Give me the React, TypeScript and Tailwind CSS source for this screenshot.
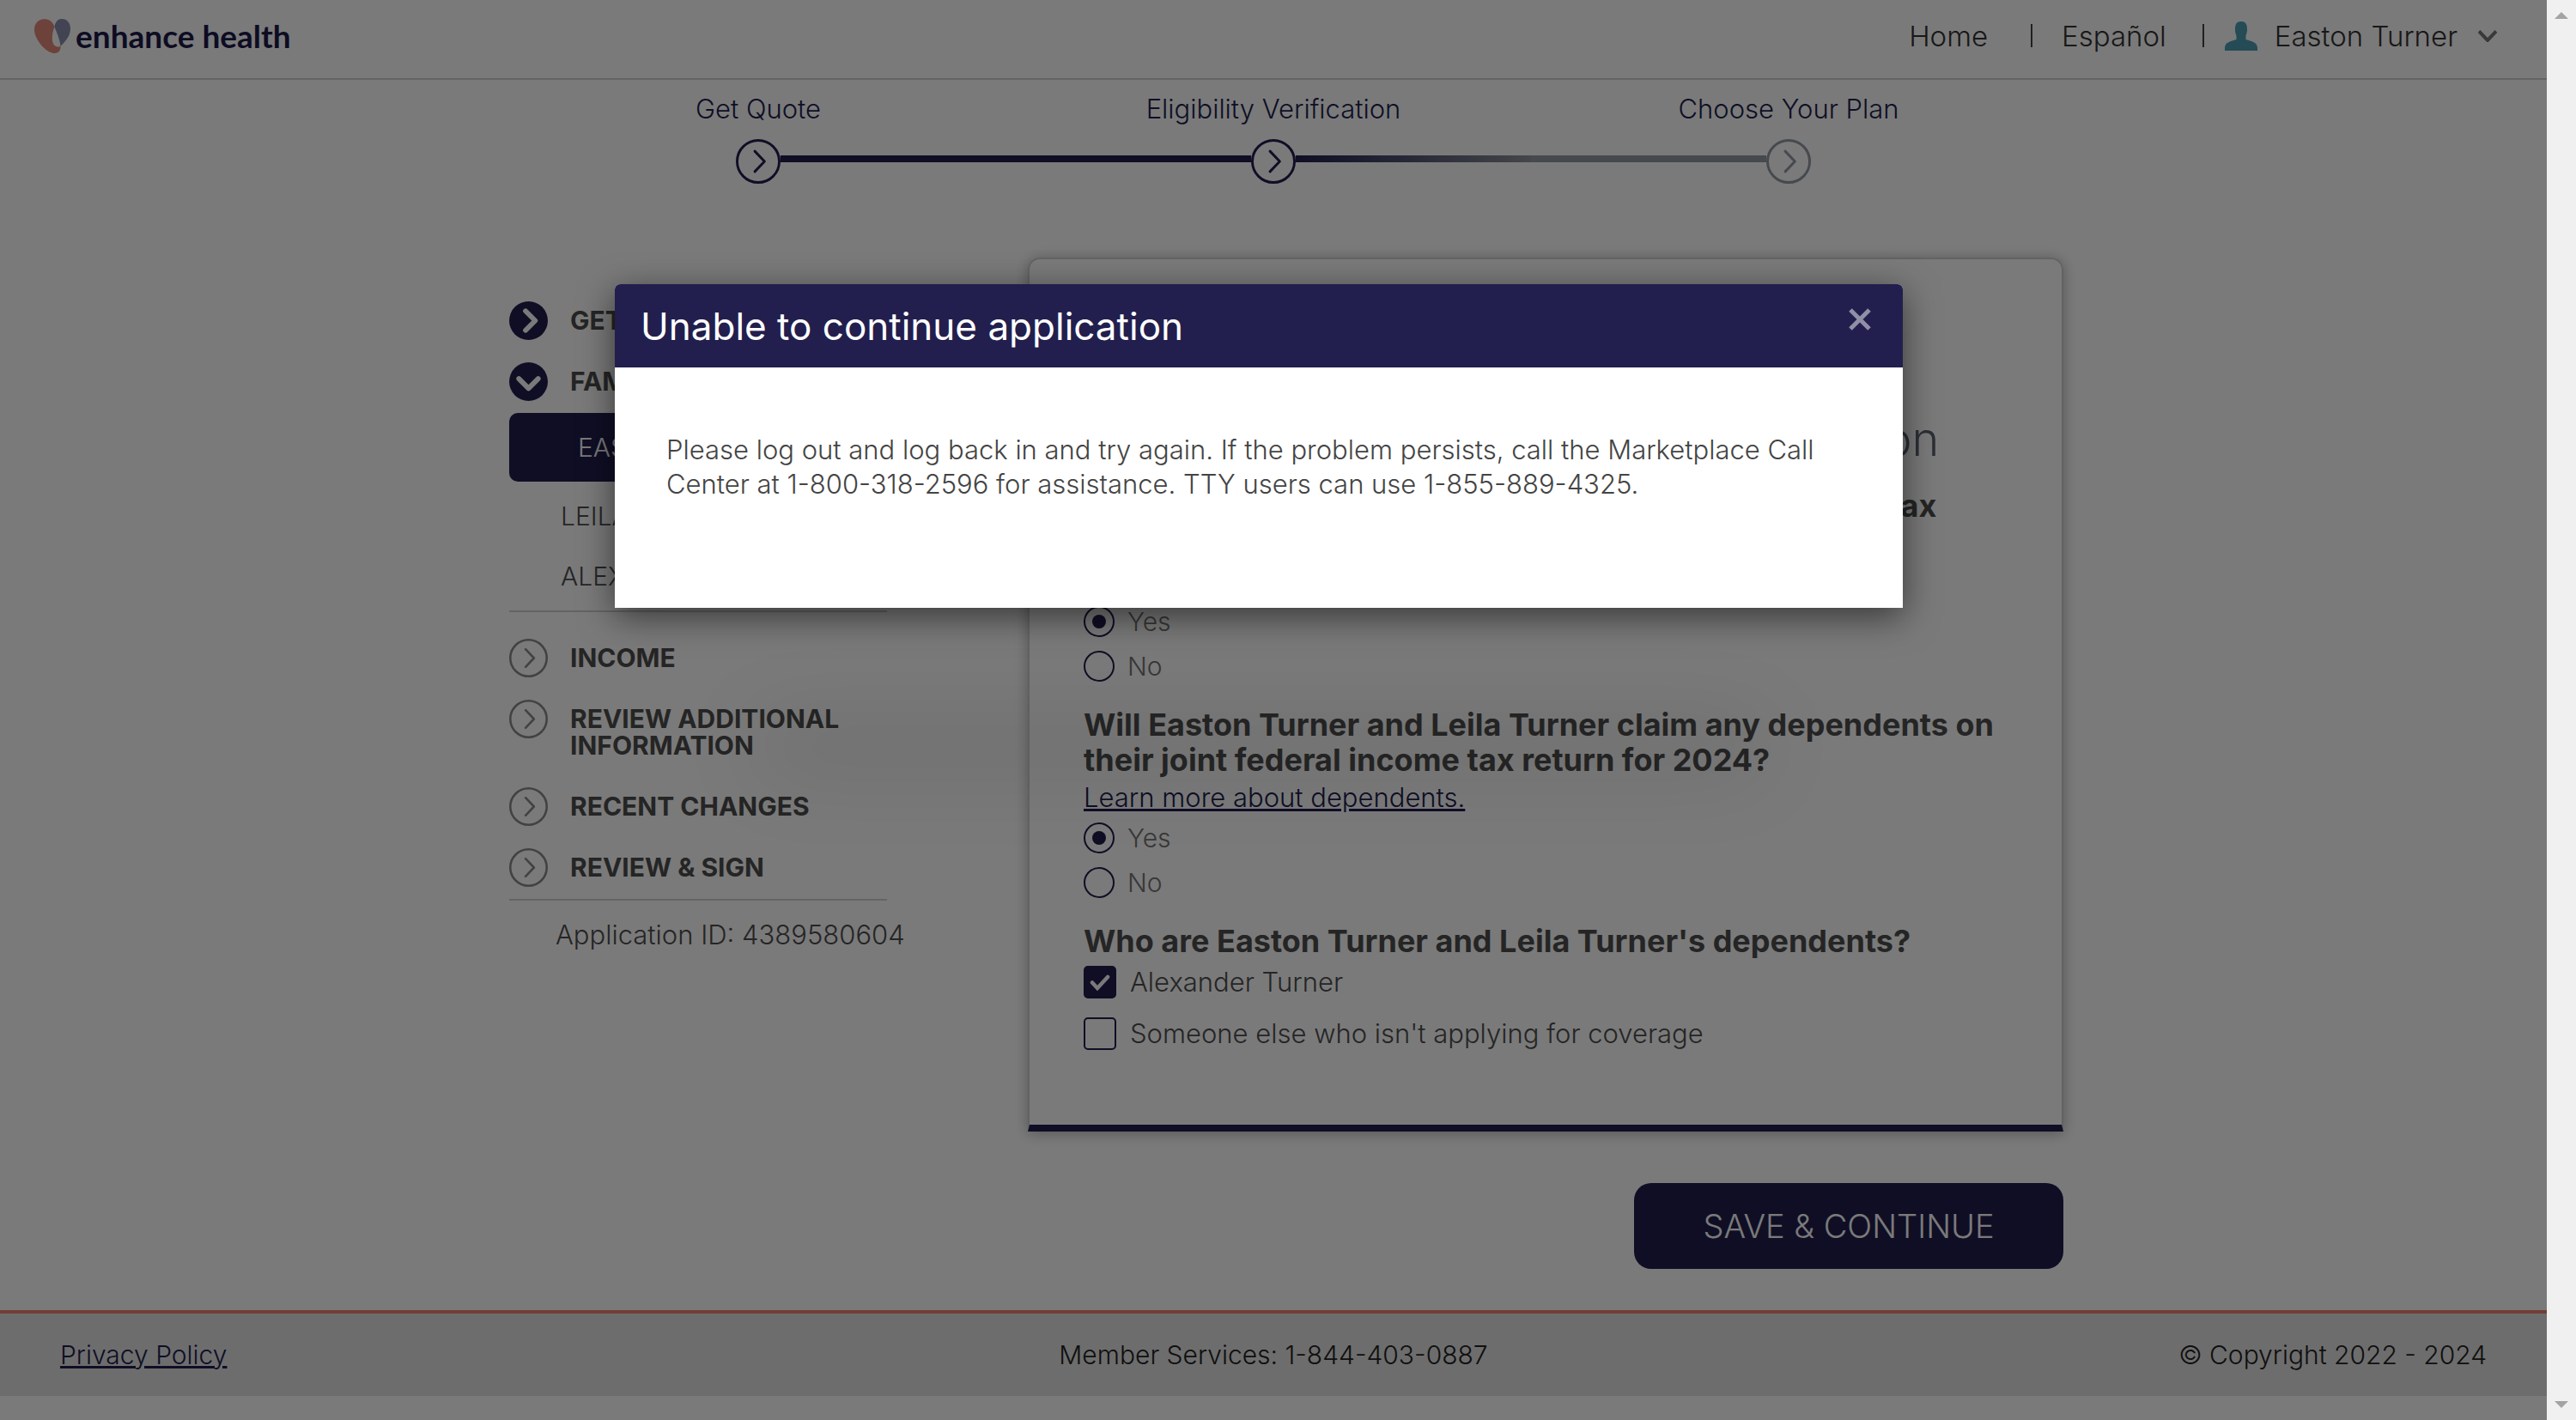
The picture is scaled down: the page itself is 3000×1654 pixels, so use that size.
import React from "react";

function ChevronCircle({ className = "", direction = "right", filled = false }: { className?: string; direction?: "right" | "down"; filled?: boolean }) {
  return (
    <svg viewBox="0 0 46 46" fill="none" aria-hidden="true" className={className}>
      <circle cx="23" cy="23" r={filled ? 23 : 21.7} fill={filled ? "#221f4e" : "none"} stroke={filled ? "none" : "currentColor"} strokeWidth="2.6" />
      <path
        d={filled ? "M19.5 11.5 31 23 19.5 34.5" : "M19.5 12.5 29.5 23 19.5 33.5"}
        transform={direction === "down" ? "rotate(90 23 23)" : undefined}
        stroke={filled ? "#fff" : "currentColor"}
        strokeWidth={filled ? 6 : 2.6}
        strokeLinecap="round"
        strokeLinejoin="round"
      />
    </svg>
  );
}

function Logo() {
  return (
    <a href="#home" className="flex items-center gap-1.5 text-[#1d1b4a]">
      <svg viewBox="0 0 126 120" className="h-10 w-[42px]" aria-hidden="true">
        <path fill="#e48a79" d="M70 28C64 8 50 1 34 1C14 1 0 16 0 38C0 70 40 120 72 120C86 120 92 110 92 94C86 101 66 100 63 76C61 55 66 40 70 28Z" />
        <path fill="#8b8fb0" d="M70 28C74 10 82 0 96 0C114 0 126 14 126 34C126 60 108 80 92 95C88 70 78 46 70 28Z" />
      </svg>
      <span className="font-['Lato'] text-[37px] leading-10 font-bold">enhance health</span>
    </a>
  );
}

function Header() {
  return (
    <header className="flex h-[93px] items-center justify-between border-b-2 border-[#d1d1d1] pr-[58px] pb-2 pl-10">
      <Logo />
      <nav className="flex items-center text-[33px] leading-10 font-light text-[#333]">
        <a href="#home">Home</a>
        <span className="mr-[34px] ml-[50px] h-[27px] w-0.5 bg-[#444]" />
        <a href="#es">Español</a>
        <span className="mr-6 ml-[42px] h-[27px] w-0.5 bg-[#444]" />
        <button type="button" className="flex items-center">
          <svg viewBox="0 0 38 34" className="mr-5 h-[34px] w-[38px]" aria-hidden="true">
            <path fill="#4b9db5" d="M12 9C12 3 14 0 19 0S26 3 26 9C26 14 25 14 24.500 17V21C31 23 38 24 38 31V34H0V31C0 24 7 23 13.500 21V17C13 14 12 14 12 9Z" />
          </svg>
          Easton Turner
          <svg viewBox="0 0 22 14" className="ml-6 h-3.5 w-[22px]" fill="none" aria-hidden="true">
            <path d="M1 1.500 11 12 21 1.500" stroke="#777" strokeWidth="4" />
          </svg>
        </button>
      </nav>
    </header>
  );
}

const steps = ["Get Quote", "Eligibility Verification", "Choose Your Plan"];

function Stepper() {
  return (
    <ol className="mx-auto grid w-[1800px] grid-cols-3 pt-[14px]">
      {steps.map((step, i) => (
        <li key={step} className="flex flex-col items-center gap-[15px]">
          <span className="text-[31px] leading-10 font-light text-[#221f4e]">{step}</span>
          <div className="flex w-full items-center">
            <span className={["h-2 flex-1 mb-1.5", "h-2 flex-1 mb-1.5 bg-[#221f4e]", "h-2 flex-1 mb-1.5 bg-[#929aa3]"][i]} />
            <ChevronCircle className={i === 2 ? "size-[52px] text-[#929aa3]" : "size-[52px] text-[#221f4e]"} />
            <span className={["h-2 flex-1 mb-1.5 bg-[#221f4e]", "h-2 flex-1 mb-1.5 bg-linear-to-r from-[#221f4e] to-[#90939a]", "h-2 flex-1 mb-1.5"][i]} />
          </div>
        </li>
      ))}
    </ol>
  );
}

function Section({ label, state = "todo" }: { label: string; state?: "done" | "open" | "todo" }) {
  return (
    <a href="#section" className="flex items-start gap-[26px]">
      <ChevronCircle filled={state !== "todo"} direction={state === "open" ? "down" : "right"} className="size-[45px] shrink-0 text-[#8a8a8a]" />
      <span className="py-[7px] text-[30px] leading-[31px] font-bold text-[#4f4f4f]">{label}</span>
    </a>
  );
}

function Sidebar() {
  return (
    <aside className="w-[440px] pt-[51px] text-[#4f4f4f]">
      <div className="flex flex-col gap-[26px]">
        <Section label="GET STARTED" state="done" />
        <Section label="FAMILY" state="open" />
      </div>
      <a href="#easton" className="mt-[14px] flex h-20 items-center rounded-[10px] bg-[#221f4e] pl-20 text-[30px] font-light text-white">EASTON</a>
      <div className="border-b-2 border-[#d1d1d1] py-[5px] text-[30px] font-light">
        <a href="#leila" className="flex h-[70px] items-center pl-[60px]">LEILA</a>
        <a href="#alexander" className="flex h-[70px] items-center pl-[60px]">ALEXANDER</a>
      </div>
      <div className="flex flex-col gap-[26px] border-b-2 border-[#d1d1d1] pt-[31px] pb-[14px]">
        <Section label="INCOME" />
        <Section label="REVIEW ADDITIONAL INFORMATION" />
        <Section label="RECENT CHANGES" />
        <Section label="REVIEW & SIGN" />
      </div>
      <p className="pt-5 pl-[54px] text-[31px] leading-10 font-light whitespace-nowrap">Application ID: 4389580604</p>
    </aside>
  );
}

function YesNo({ name }: { name: string }) {
  return (
    <div className="flex flex-col gap-3 text-[30px] font-light text-[#757575]">
      {["Yes", "No"].map((option, i) => (
        <label key={option} className="flex h-10 items-center gap-[15px]">
          <input
            type="radio"
            name={name}
            defaultChecked={i === 0}
            className="grid size-9 appearance-none place-items-center rounded-full border-2 border-[#221f4e] before:size-4 before:rounded-full checked:before:bg-[#221f4e]"
          />
          {option}
        </label>
      ))}
    </div>
  );
}

function Tick({ label, checked = false }: { label: string; checked?: boolean }) {
  return (
    <label className="flex h-10 items-center gap-4 text-[31px] font-light">
      <span className="relative flex">
        <input type="checkbox" defaultChecked={checked} className="peer size-[38px] appearance-none rounded-[5px] border-2 border-[#221f4e] checked:bg-[#221f4e]" />
        <svg viewBox="0 0 38 38" fill="none" className="pointer-events-none absolute inset-0 hidden peer-checked:block" aria-hidden="true">
          <path d="M10 19.500 16 26 28 13" stroke="#fff" strokeWidth="4.500" strokeLinecap="round" />
        </svg>
      </span>
      {label}
    </label>
  );
}

function QuestionCard() {
  return (
    <section className="rounded-t-[14px] border-2 border-b-8 border-[#cfcfcf] border-b-[#221f4e] px-[63px] pt-[174px] pb-[86px] text-[#4f4f4f] shadow-[0_2px_16px_rgba(0,0,0,0.3)]">
      <h1 className="text-center text-[54px] leading-[72px] font-light text-[#5b6470]">Easton Turner's tax filing information</h1>
      <h2 className="mt-[21px] text-[36px] leading-[41px] font-bold">
        Will Easton Turner and Leila Turner file a joint income tax
        <br />
        return for 2024?
      </h2>
      <a href="#joint" className="mt-[3px] mb-[10px] block text-[31px] leading-10 font-light text-[#221f4e] underline">Learn more about filing jointly.</a>
      <YesNo name="joint" />
      <h2 className="mt-[28px] text-[36px] leading-[41px] font-bold">
        Will Easton Turner and Leila Turner claim any dependents on their joint federal income tax return for 2024?
      </h2>
      <a href="#dependents" className="mt-[3px] mb-[7px] inline-block text-[31px] leading-10 font-light text-[#221f4e] underline">
        Learn more about dependents.
      </a>
      <YesNo name="dependents" />
      <h2 className="mt-[28px] text-[36px] leading-[41px] font-bold">Who are Easton Turner and Leila Turner's dependents?</h2>
      <div className="mt-[7px] flex flex-col gap-5">
        <Tick label="Alexander Turner" checked />
        <Tick label="Someone else who isn't applying for coverage" />
      </div>
    </section>
  );
}

function Footer() {
  return (
    <footer className="mt-12 grid h-[100px] grid-cols-3 items-center border-t-4 border-[#ef8272] bg-[#e4e4e4] px-[70px] text-[30px] font-light text-[#222]">
      <a href="#privacy" className="justify-self-start text-[#221f4e] underline">Privacy Policy</a>
      <span className="justify-self-center">Member Services: 1-844-403-0887</span>
      <span className="justify-self-end">© Copyright 2022 - 2024</span>
    </footer>
  );
}

function Modal() {
  return (
    <div className="absolute inset-0 flex items-start justify-center bg-black/52 pt-[331px] pr-[34px]">
      <div
        role="dialog"
        aria-labelledby="dialog-title"
        className="w-[1500px] rounded-t-md bg-white shadow-[0_10px_40px_rgba(0,0,0,0.55),0_350px_100px_-165px_rgba(0,0,0,0.13)]"
      >
        <div className="flex h-[97px] items-center justify-between rounded-t-md bg-[#221f4e] pr-[37px] pl-[30px]">
          <h2 id="dialog-title" className="text-[44px] text-white">Unable to continue application</h2>
          <button type="button" aria-label="Close" className="mb-[15px]">
            <svg viewBox="0 0 26 26" fill="none" className="size-[26px]" aria-hidden="true">
              <path d="M2 2 24 24M24 2 2 24" stroke="#918fa6" strokeWidth="5" />
            </svg>
          </button>
        </div>
        <p className="px-[60px] pt-[76px] pb-[124px] text-[31px] leading-10 font-light text-[#444]">
          Please log out and log back in and try again. If the problem persists, call the Marketplace Call Center at 1-800-318-2596 for assistance. TTY users can use 1-855-889-4325.
        </p>
      </div>
    </div>
  );
}

function Scrollbar() {
  return (
    <div className="flex w-[34px] flex-col items-center justify-between bg-[#f0f0f0] py-3.5" aria-hidden="true">
      <svg viewBox="0 0 16 8" className="h-2 w-4"><path d="M8 0 16 8H0Z" fill="#a3a3a3" /></svg>
      <svg viewBox="0 0 16 8" className="h-2 w-4"><path d="M8 8 16 0H0Z" fill="#a3a3a3" /></svg>
    </div>
  );
}

export default function App() {
  return (
    <div className="flex min-h-screen bg-white font-['Inter',sans-serif]">
      <div className="relative flex-1">
        <Header />
        <Stepper />
        <main className="mx-auto mt-[86px] flex w-[1840px] items-start justify-between pl-[30px]">
          <Sidebar />
          <div className="flex w-[1206px] flex-col">
            <QuestionCard />
            <button type="button" className="mt-[60px] h-[100px] w-[500px] self-end rounded-[20px] bg-[#221f4e] text-[38px] font-light text-white">
              SAVE &amp; CONTINUE
            </button>
          </div>
        </main>
        <Footer />
        <Modal />
      </div>
      <Scrollbar />
    </div>
  );
}
